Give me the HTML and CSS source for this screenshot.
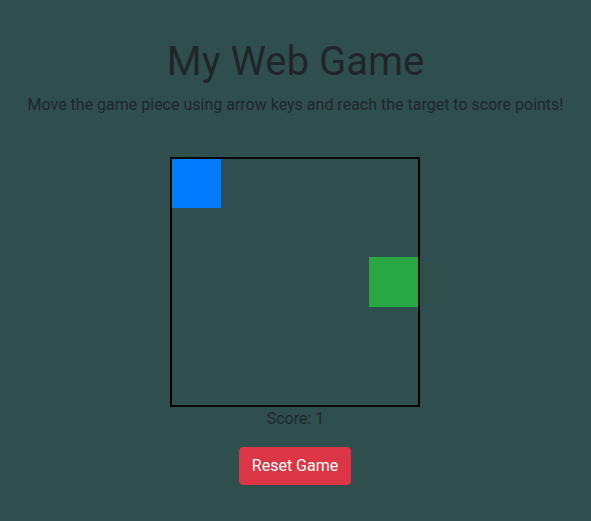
FILE: index.html
```html
<!DOCTYPE html>
<html>
<head>
<meta charset="utf-8">
<link rel="stylesheet" href="styles.css">
</head>
<body>
<main class="page">
  <h1 class="title">My Web Game</h1>
  <p class="subtitle">Move the game piece using arrow keys and reach the target to score points!</p>
  <div class="board">
    <div class="piece"></div>
    <div class="target"></div>
  </div>
  <div class="score">Score: 1</div>
  <button class="btn-reset">Reset Game</button>
</main>
</body>
</html>
```
FILE: styles.css
```css
html, body {
  margin: 0;
  padding: 0;
  background: #2f4f4f;
}
body {
  font-family: Roboto, "Liberation Sans", sans-serif;
  color: #212529;
}
.page {
  display: flex;
  flex-direction: column;
  align-items: center;
  padding-top: 38px;
}
.title {
  margin: 0;
  font-size: 40px;
  font-weight: 400;
  line-height: 48px;
}
.subtitle {
  margin: 7px 0 0;
  font-size: 16px;
  line-height: 24px;
}
.board {
  position: relative;
  box-sizing: border-box;
  width: 250px;
  height: 250px;
  border: 2px solid #000;
  margin: 40px 0 0 -1px;
  overflow: hidden;
}
.piece {
  position: absolute;
  left: 0;
  top: 0;
  width: 49px;
  height: 49px;
  background: #007bff;
}
.target {
  position: absolute;
  left: 197px;
  top: 98px;
  width: 50px;
  height: 50px;
  background: #28a745;
}
.score {
  font-size: 16px;
  line-height: 19px;
  margin-top: 2px;
}
.btn-reset {
  margin: 19px 0 0 -1px;
  font-family: inherit;
  font-size: 16px;
  line-height: 24px;
  padding: 6px 12px;
  border: 1px solid #dc3545;
  border-radius: 4px;
  background: #dc3545;
  color: #fff;
}
```
